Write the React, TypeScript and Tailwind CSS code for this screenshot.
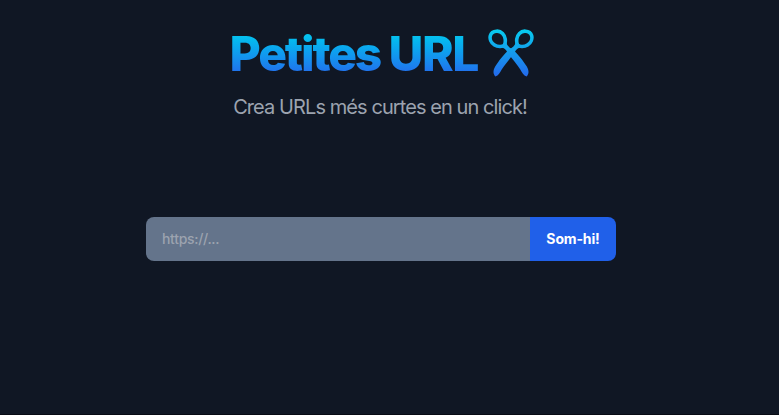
function Scissors() {
  return (
    <svg className="ml-[9px] mt-[29px] h-[48px] w-[46px] shrink-0" viewBox="0 0 46 48" fill="none" aria-hidden="true">
      <defs>
        <linearGradient id="blade" gradientUnits="userSpaceOnUse" x1="0" y1="0" x2="0" y2="50">
          <stop offset="0" stopColor="#06cdee" />
          <stop offset="1" stopColor="#2563eb" />
        </linearGradient>
      </defs>
      <g stroke="url(#blade)" strokeWidth="3.6" strokeLinejoin="round">
        <path d="M8.500 2.200 C13.500 1.800 16.700 6 17.200 10 C17.500 12.500 17.200 14.800 16.200 16.200 C14.500 18.200 9.500 17.900 6.500 16 C2.800 13.600 1.500 9.500 2.400 6.500 C3.200 3.800 5.500 2.400 8.500 2.200Z" />
        <path d="M37.500 2.200 C32.500 1.800 29.300 6 28.800 10 C28.500 12.500 28.800 14.800 29.800 16.200 C31.500 18.200 36.500 17.900 39.500 16 C43.200 13.600 44.500 9.500 43.600 6.500 C42.800 3.800 40.500 2.400 37.500 2.200Z" />
      </g>
      <g fill="url(#blade)">
        <path d="M13.500 17 L18 13 C19 16.500 21 18.500 24.500 20.200 C29.500 24.500 35.500 32 38.800 37.500 C41 41.500 41.200 44.500 38.600 47.500 C35.500 46.500 34 43.500 32.300 40.500 C28.500 34.500 23 28.500 19.500 23.500 C18 20.500 16 19 13.500 18.500Z" />
        <path d="M32.500 17 L28 13 C27 16.500 25 18.500 21.500 20.200 C16.500 24.500 10.500 32 7.200 37.500 C5 41.500 4.800 44.500 7.400 47.500 C10.500 46.500 12 43.500 13.700 40.500 C17.500 34.500 23 28.500 26.500 23.500 C28 20.500 30 19 32.500 18.500Z" />
      </g>
    </svg>
  );
}

export default function App() {
  return (
    <div className="h-[415px] overflow-hidden border-b border-[#080b14] bg-[#101724] font-['Inter',sans-serif]">
      <main className="flex w-[762px] flex-col items-center">
        <h1 className="flex h-[77px] w-[303px] items-start whitespace-nowrap">
          <span className="mt-[30px] w-[249px] shrink-0 bg-gradient-to-b from-[#06cdee] to-[#2563eb] bg-clip-text text-[48px] font-extrabold leading-[48px] tracking-[-2.15px] text-transparent">
            Petites <span className="tracking-[-1.5px]">URL</span>
          </span>
          <Scissors />
        </h1>
        <p className="mr-[2px] mt-4 whitespace-nowrap text-xl leading-7 tracking-[-0.92px] text-[#9ca3af]">
          Crea URLs més curtes en un click!
        </p>
        <form className="mt-24 flex h-11 w-[470px] overflow-hidden rounded-lg" onSubmit={(e) => e.preventDefault()}>
          <input
            type="text"
            aria-label="URL"
            placeholder="https://..."
            className="min-w-0 flex-1 bg-[#64748b] px-4 text-sm font-medium tracking-[-0.3px] text-white outline-none placeholder:text-[#9ca3af]"
          />
          <button type="submit" className="w-[86px] bg-[#2060e9] text-sm font-bold tracking-[-0.15px] text-white">
            Som-hi!
          </button>
        </form>
      </main>
    </div>
  );
}
